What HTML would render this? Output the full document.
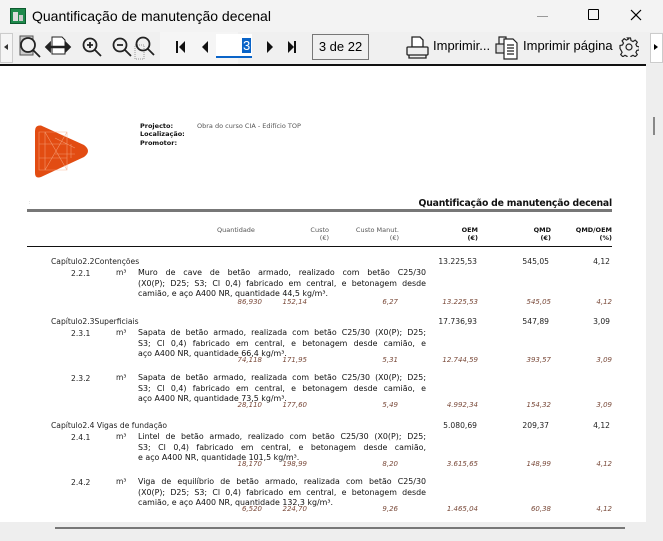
<!DOCTYPE html>
<html><head><meta charset="utf-8"><style>
*{margin:0;padding:0;box-sizing:border-box}
body{width:663px;height:541px;overflow:hidden;background:#f0f0f0;font-family:"Liberation Sans",sans-serif;position:relative}
.a{position:absolute;white-space:nowrap}
.t{font-family:"DejaVu Sans",sans-serif;font-size:7.6px;color:#222}
.r{text-align:right}
.n{font-family:"DejaVu Sans",sans-serif;font-size:7px;font-style:italic;color:#7a4a3a}
.d{position:absolute;width:288px;font-family:"DejaVu Sans",sans-serif;font-size:7.9px;line-height:10.5px;color:#111}
.d span{display:block;text-align:justify;text-align-last:justify;white-space:nowrap}
.d span.l{text-align-last:left}
.h{font-family:"DejaVu Sans",sans-serif;font-size:6.5px;color:#555}
.hb{font-family:"DejaVu Sans",sans-serif;font-size:6.5px;color:#111;font-weight:bold}
.tb{position:absolute;top:36px;font-size:13px;color:#000}
</style></head><body>
<div class="a" style="left:0;top:0;width:663px;height:32px;background:#f3f3f3"></div>
<svg class="a" style="left:10px;top:8px" width="16" height="16"><rect x="0.5" y="0.5" width="15" height="15" fill="#1f8a4c" stroke="#0d5a2e"/><rect x="3" y="4" width="5" height="9" fill="#ddd"/><rect x="9" y="7" width="4" height="6" fill="#ccc"/></svg>
<div class="a" style="left:32px;top:8px;font-size:14px;color:#000">Quantificação de manutenção decenal</div>
<div class="a" style="left:537px;top:16px;width:11px;height:1px;background:#999"></div>
<div class="a" style="left:588px;top:9px;width:11px;height:11px;border:1.3px solid #000;border-radius:1px"></div>
<svg class="a" style="left:630px;top:9px" width="12" height="12"><path d="M1 1L11 11M11 1L1 11" stroke="#000" stroke-width="1.2"/></svg>
<div class="a" style="left:0;top:32px;width:663px;height:32px;background:#f0f0f0"></div>
<div class="a" style="left:0;top:33px;width:13px;height:30px;border:1px solid #ccc;background:#f5f5f5"></div>
<div class="a" style="left:4px;top:44px;width:0;height:0;border:3px solid transparent;border-right:4px solid #333;border-left:0"></div>
<div class="a" style="left:650px;top:33px;width:13px;height:30px;border:1px solid #ccc;background:#fff"></div>
<div class="a" style="left:654px;top:44px;width:0;height:0;border:3.5px solid transparent;border-left:4px solid #000;border-right:0"></div>
<svg class="a" style="left:16px;top:33px" width="120" height="30" fill="none" stroke="#222" stroke-width="1.8">
<rect x="4" y="3" width="13" height="19" fill="#ccc" stroke="#555" stroke-width="1"/><circle cx="12" cy="12" r="7" fill="#eee"/><path d="M17 17l7 7"/>
<path d="M36 4h10l3 3v14H36z" fill="#fff" stroke-width="1"/><path d="M30 14h24" stroke-width="2.5"/><path d="M30 14l4-4v8zM54 14l-4-4v8z" fill="#222"/>
<circle cx="74" cy="12" r="6.5"/><path d="M71 12h6M74 9v6M79 17l6 6"/>
<circle cx="104" cy="12" r="6.5"/><path d="M101 12h6M109 17l6 6"/>
</svg>
<svg class="a" style="left:133px;top:33px" width="25" height="30" fill="none" stroke="#222" stroke-width="1.8"><rect x="2" y="12" width="9" height="14" stroke="#999" stroke-width="1" stroke-dasharray="1 1"/><circle cx="10" cy="11" r="6.5"/><path d="M15 16l6 6"/></svg>
<div class="a" style="left:160px;top:32px;width:78px;height:32px;background:#f5f5f5"></div>
<svg class="a" style="left:170px;top:38px" width="135" height="18" fill="#111">
<rect x="6" y="3" width="2" height="12"/><path d="M15 3v12l-6-6z"/>
<path d="M38 3v12l-6-6z"/>
<path d="M97 3v12l6-6z"/>
<path d="M118 3v12l6-6z"/><rect x="124" y="3" width="2" height="12"/>
</svg>
<div class="a" style="left:216px;top:34px;width:36px;height:24px;background:#fff;border-bottom:2px solid #0a64c8"></div>
<div class="a" style="left:242px;top:38px;font-size:13px;background:#0a64c8;color:#fff;padding:0 1px">3</div>
<div class="a" style="left:312px;top:34px;width:57px;height:26px;border:1px solid #777;background:#f0f0f0;font-size:13px;text-align:center;line-height:24px">3 de 22</div>
<svg class="a" style="left:405px;top:35px" width="26" height="26" fill="none" stroke="#222" stroke-width="1.3"><path d="M7 2h8l3 3v7H7z" fill="#fff"/><rect x="2" y="12" width="21" height="8" rx="1" fill="#eee"/><path d="M4 20v3h17v-3"/></svg>
<div class="tb" style="left:433px;top:38px">Imprimir...</div>
<svg class="a" style="left:494px;top:34px" width="28" height="28" fill="none" stroke="#222" stroke-width="1.2"><path d="M5 3h7v8H5z"/><rect x="2" y="10" width="12" height="9" fill="#ddd"/><path d="M10 5h9l4 4v16H10z" fill="#fff"/><path d="M13 11h7M13 14h7M13 17h7M13 20h7"/></svg>
<div class="tb" style="left:523px;top:38px">Imprimir página</div>
<svg class="a" style="left:619px;top:37px" width="20" height="20" fill="none" stroke="#222" stroke-width="1.2"><circle cx="10" cy="10" r="3"/><path d="M8.5 1h3l.5 2.5 2 1 2.2-1.4 2.1 2.1-1.4 2.2 1 2 2.5.5v3l-2.5.5-1 2 1.4 2.2-2.1 2.1-2.2-1.4-2 1-.5 2.5h-3l-.5-2.5-2-1-2.200 1.4-2.1-2.1 1.4-2.2-1-2L1 11.5v-3l2.5-.5 1-2-1.4-2.2 2.1-2.1 2.2 1.4 2-1z"/></svg>
<div class="a" style="left:0;top:64px;width:646px;height:2px;background:#111"></div>
<div class="a" style="left:0;top:66px;width:646px;height:456px;background:#fff"></div>
<div class="a" style="left:646px;top:64px;width:17px;height:458px;background:#eeeeee"></div>
<div class="a" style="left:653px;top:117px;width:2px;height:18px;background:#888"></div>
<div class="a" style="left:0;top:522px;width:663px;height:19px;background:#eeeeee"></div>
<div class="a" style="left:55px;top:527px;width:570px;height:2px;background:#777"></div>
<svg class="a" style="left:33px;top:124px" width="60" height="56"><path d="M2 7Q2 1 8 1.5L51 21Q59 27 51 33L8 53Q2 55 2 49z" fill="#e24c12"/><g stroke="#f6a983" stroke-width="0.6" fill="none" opacity="0.8"><path d="M6 8h28v38H6zM12 8v38M6 20h28M6 34h28M12 8l22 38M34 8L12 46M22 14l20 10M22 30h20M38 20v14"/></g></svg>
<div class="a hb" style="left:140px;top:122px">Projecto:</div>
<div class="a hb" style="left:140px;top:130px">Localização:</div>
<div class="a hb" style="left:140px;top:139px">Promotor:</div>
<div class="a h" style="left:197px;top:122px">Obra do curso CIA - Edifício TOP</div>
<div class="a" style="left:29px;top:200px;font-size:5px;color:#aaa">:</div>
<div class="a" style="left:380px;top:198px;width:232px;text-align:right;font-family:'DejaVu Sans',sans-serif;font-size:9.3px;font-weight:bold;color:#111;letter-spacing:-0.2px">Quantificação de manutenção decenal</div>
<div class="a" style="left:27px;top:209px;width:585px;height:3px;background:#777"></div>
<div class="a h" style="left:217px;top:226px">Quantidade</div>
<div class="a h r" style="left:280px;top:226px;width:49px">Custo<br>(€)</div>
<div class="a h r" style="left:340px;top:226px;width:59px">Custo Manut.<br>(€)</div>
<div class="a hb r" style="left:430px;top:226px;width:48px">OEM<br>(€)</div>
<div class="a hb r" style="left:500px;top:226px;width:51px">QMD<br>(€)</div>
<div class="a hb r" style="left:560px;top:226px;width:52px">QMD/OEM<br>(%)</div>
<div class="a" style="left:27px;top:246px;width:585px;height:1px;background:#111"></div>

<div class="a t" style="left:51px;top:257px">Capítulo2.2Contenções</div>
<div class="a t r" style="left:410px;top:257px;width:67px">13.225,53</div>
<div class="a t r" style="left:500px;top:257px;width:49px">545,05</div>
<div class="a t r" style="left:570px;top:257px;width:40px">4,12</div>
<div class="a t" style="left:71px;top:269px">2.2.1</div><div class="a t" style="left:116px;top:268px">m³</div>
<div class="d" style="left:138px;top:268px"><span>Muro de cave de betão armado, realizado com betão C25/30</span><span>(X0(P); D25; S3; Cl 0,4) fabricado em central, e betonagem desde</span><span class="l">camião, e aço A400 NR, quantidade 44,5 kg/m³.</span></div>

<div class="a t" style="left:51px;top:317px">Capítulo2.3Superficiais</div>
<div class="a t r" style="left:410px;top:317px;width:67px">17.736,93</div>
<div class="a t r" style="left:500px;top:317px;width:49px">547,89</div>
<div class="a t r" style="left:570px;top:317px;width:40px">3,09</div>
<div class="a t" style="left:71px;top:329px">2.3.1</div><div class="a t" style="left:116px;top:328px">m³</div>
<div class="d" style="left:138px;top:328px"><span>Sapata de betão armado, realizada com betão C25/30 (X0(P); D25;</span><span>S3; Cl 0,4) fabricado em central, e betonagem desde camião, e</span><span class="l">aço A400 NR, quantidade 66,4 kg/m³.</span></div>
<div class="a t" style="left:71px;top:374px">2.3.2</div><div class="a t" style="left:116px;top:373px">m³</div>
<div class="d" style="left:138px;top:373px"><span>Sapata de betão armado, realizada com betão C25/30 (X0(P); D25;</span><span>S3; Cl 0,4) fabricado em central, e betonagem desde camião, e</span><span class="l">aço A400 NR, quantidade 73,5 kg/m³.</span></div>

<div class="a t" style="left:51px;top:421px">Capítulo2.4 Vigas de fundação</div>
<div class="a t r" style="left:410px;top:421px;width:67px">5.080,69</div>
<div class="a t r" style="left:500px;top:421px;width:49px">209,37</div>
<div class="a t r" style="left:570px;top:421px;width:40px">4,12</div>
<div class="a t" style="left:71px;top:433px">2.4.1</div><div class="a t" style="left:116px;top:432px">m³</div>
<div class="d" style="left:138px;top:432px"><span>Lintel de betão armado, realizado com betão C25/30 (X0(P); D25;</span><span>S3; Cl 0,4) fabricado em central, e betonagem desde camião,</span><span class="l">e aço A400 NR, quantidade 101,5 kg/m³.</span></div>
<div class="a t" style="left:71px;top:478px">2.4.2</div><div class="a t" style="left:116px;top:477px">m³</div>
<div class="d" style="left:138px;top:477px"><span>Viga de equilíbrio de betão armado, realizada com betão C25/30</span><span>(X0(P); D25; S3; Cl 0,4) fabricado em central, e betonagem desde</span><span class="l">camião, e aço A400 NR, quantidade 132,3 kg/m³.</span></div>

<div class="a n r" style="left:200px;top:298px;width:62px">86,930</div><div class="a n r" style="left:260px;top:298px;width:47px">152,14</div><div class="a n r" style="left:350px;top:298px;width:48px">6,27</div><div class="a n r" style="left:410px;top:298px;width:68px">13.225,53</div><div class="a n r" style="left:500px;top:298px;width:51px">545,05</div><div class="a n r" style="left:570px;top:298px;width:42px">4,12</div>
<div class="a n r" style="left:200px;top:356px;width:62px">74,118</div><div class="a n r" style="left:260px;top:356px;width:47px">171,95</div><div class="a n r" style="left:350px;top:356px;width:48px">5,31</div><div class="a n r" style="left:410px;top:356px;width:68px">12.744,59</div><div class="a n r" style="left:500px;top:356px;width:51px">393,57</div><div class="a n r" style="left:570px;top:356px;width:42px">3,09</div>
<div class="a n r" style="left:200px;top:401px;width:62px">28,110</div><div class="a n r" style="left:260px;top:401px;width:47px">177,60</div><div class="a n r" style="left:350px;top:401px;width:48px">5,49</div><div class="a n r" style="left:410px;top:401px;width:68px">4.992,34</div><div class="a n r" style="left:500px;top:401px;width:51px">154,32</div><div class="a n r" style="left:570px;top:401px;width:42px">3,09</div>
<div class="a n r" style="left:200px;top:460px;width:62px">18,170</div><div class="a n r" style="left:260px;top:460px;width:47px">198,99</div><div class="a n r" style="left:350px;top:460px;width:48px">8,20</div><div class="a n r" style="left:410px;top:460px;width:68px">3.615,65</div><div class="a n r" style="left:500px;top:460px;width:51px">148,99</div><div class="a n r" style="left:570px;top:460px;width:42px">4,12</div>
<div class="a n r" style="left:200px;top:505px;width:62px">6,520</div><div class="a n r" style="left:260px;top:505px;width:47px">224,70</div><div class="a n r" style="left:350px;top:505px;width:48px">9,26</div><div class="a n r" style="left:410px;top:505px;width:68px">1.465,04</div><div class="a n r" style="left:500px;top:505px;width:51px">60,38</div><div class="a n r" style="left:570px;top:505px;width:42px">4,12</div>
</body></html>
